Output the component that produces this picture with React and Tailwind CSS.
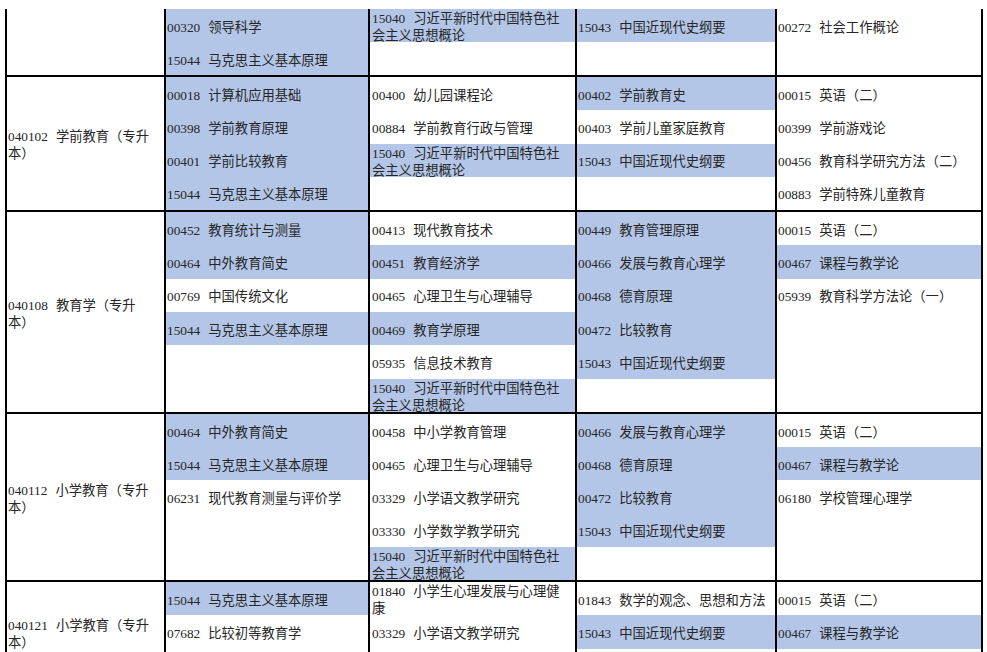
import React from "react";

// [code, name, highlighted]
const ROWS = [
  {
    code: "",
    name: ["", ""],
    height: "h-[66px]",
    rows: "grid-rows-2",
    cols: [
      [["00320", "领导科学", true], ["15044", "马克思主义基本原理", true]],
      [["15040", "习近平新时代中国特色社会主义思想概论", true], null],
      [["15043", "中国近现代史纲要", true], null],
      [["00272", "社会工作概论", false], null],
    ],
  },
  {
    code: "040102",
    name: ["学前教育（专升", "本）"],
    height: "h-[135px]",
    rows: "grid-rows-4",
    cols: [
      [
        ["00018", "计算机应用基础", true],
        ["00398", "学前教育原理", true],
        ["00401", "学前比较教育", true],
        ["15044", "马克思主义基本原理", true],
      ],
      [
        ["00400", "幼儿园课程论", false],
        ["00884", "学前教育行政与管理", false],
        ["15040", "习近平新时代中国特色社会主义思想概论", true],
        null,
      ],
      [
        ["00402", "学前教育史", true],
        ["00403", "学前儿童家庭教育", false],
        ["15043", "中国近现代史纲要", true],
        null,
      ],
      [
        ["00015", "英语（二）", false],
        ["00399", "学前游戏论", false],
        ["00456", "教育科学研究方法（二）", false],
        ["00883", "学前特殊儿童教育", false],
      ],
    ],
  },
  {
    code: "040108",
    name: ["教育学（专升", "本）"],
    height: "h-[202px]",
    rows: "grid-rows-6",
    cols: [
      [
        ["00452", "教育统计与测量", true],
        ["00464", "中外教育简史", true],
        ["00769", "中国传统文化", false],
        ["15044", "马克思主义基本原理", true],
        null,
        null,
      ],
      [
        ["00413", "现代教育技术", false],
        ["00451", "教育经济学", true],
        ["00465", "心理卫生与心理辅导", false],
        ["00469", "教育学原理", true],
        ["05935", "信息技术教育", false],
        ["15040", "习近平新时代中国特色社会主义思想概论", true],
      ],
      [
        ["00449", "教育管理原理", true],
        ["00466", "发展与教育心理学", true],
        ["00468", "德育原理", true],
        ["00472", "比较教育", true],
        ["15043", "中国近现代史纲要", true],
        null,
      ],
      [
        ["00015", "英语（二）", false],
        ["00467", "课程与教学论", true],
        ["05939", "教育科学方法论（一）", false],
        null,
        null,
        null,
      ],
    ],
  },
  {
    code: "040112",
    name: ["小学教育（专升", "本）"],
    height: "h-[168px]",
    rows: "grid-rows-5",
    cols: [
      [
        ["00464", "中外教育简史", true],
        ["15044", "马克思主义基本原理", true],
        ["06231", "现代教育测量与评价学", false],
        null,
        null,
      ],
      [
        ["00458", "中小学教育管理", false],
        ["00465", "心理卫生与心理辅导", false],
        ["03329", "小学语文教学研究", false],
        ["03330", "小学数学教学研究", false],
        ["15040", "习近平新时代中国特色社会主义思想概论", true],
      ],
      [
        ["00466", "发展与教育心理学", true],
        ["00468", "德育原理", true],
        ["00472", "比较教育", true],
        ["15043", "中国近现代史纲要", true],
        null,
      ],
      [
        ["00015", "英语（二）", false],
        ["00467", "课程与教学论", true],
        ["06180", "学校管理心理学", false],
        null,
        null,
      ],
    ],
  },
  {
    code: "040121",
    name: ["小学教育（专升", "本）"],
    height: "h-[102px]",
    rows: "grid-rows-3",
    cols: [
      [
        ["15044", "马克思主义基本原理", true],
        ["07682", "比较初等教育学", false],
        null,
      ],
      [
        ["01840", "小学生心理发展与心理健康", false],
        ["03329", "小学语文教学研究", false],
        null,
      ],
      [
        ["01843", "数学的观念、思想和方法", false],
        ["15043", "中国近现代史纲要", true],
        null,
      ],
      [
        ["00015", "英语（二）", false],
        ["00467", "课程与教学论", true],
        null,
      ],
    ],
  },
];

const COLS = [
  { box: "w-[204px] border-r-2", pad: "pl-[1px] pr-[6px]" },
  { box: "w-[207px] border-r-2", pad: "pl-[2px] pr-[8px]" },
  { box: "w-[200px] border-r-2", pad: "pl-[1px] pr-[6px]" },
  { box: "flex-1", pad: "pl-[1px] pr-[6px]" },
];

function Course({ item, pad }) {
  if (!item) return <div />;
  const [code, name, hl] = item;
  return (
    <div className={["flex items-center pt-[3px]", pad, hl ? "bg-[#b4c6e7]" : ""].join(" ")}>
      <p className="leading-[17px] break-all">
        <span>{code}</span>
        <span className="ml-[8px]">{name}</span>
      </p>
    </div>
  );
}

export default function App() {
  return (
    <div className="h-[652px] overflow-hidden bg-white pt-[9px] pl-[5px] text-[13.3px] text-[#262626] font-[family-name:Liberation_Serif,Noto_Sans_CJK_SC,serif]">
      <div className="w-[978px] border-x-2 border-black">
        {ROWS.map((row, ri) => (
          <div
            key={ri}
            className={["flex border-black", row.height, ri > 0 ? "border-t-2" : ""].join(" ")}
          >
            <div className="w-[159px] border-r-2 border-black flex flex-col justify-center pl-[1px] pt-[3px] leading-[17px]">
              {row.code && (
                <>
                  <p className="whitespace-nowrap">
                    <span>{row.code}</span>
                    <span className="ml-[8px]">{row.name[0]}</span>
                  </p>
                  <p>{row.name[1]}</p>
                </>
              )}
            </div>
            {row.cols.map((col, ci) => (
              <div key={ci} className={["grid border-black", row.rows, COLS[ci].box].join(" ")}>
                {col.map((item, ii) => (
                  <Course key={ii} item={item} pad={COLS[ci].pad} />
                ))}
              </div>
            ))}
          </div>
        ))}
      </div>
    </div>
  );
}
